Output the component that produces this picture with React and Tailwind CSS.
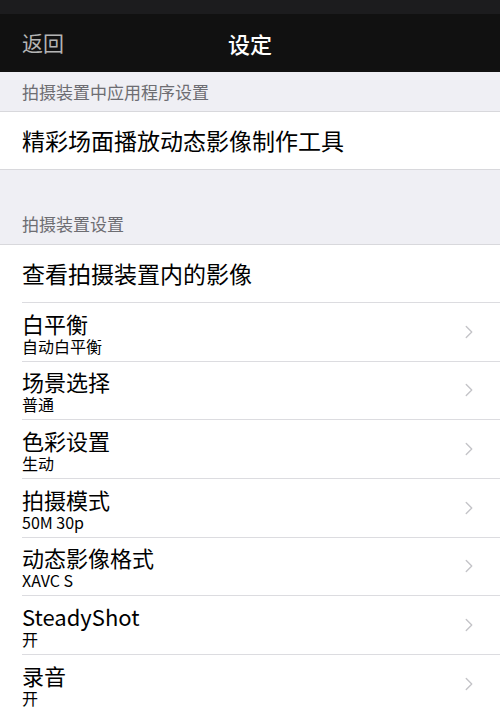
import { ChevronRight } from 'lucide-react'

const font = { fontFamily: '"Noto Sans CJK SC", "Liberation Sans", sans-serif' }

const items = [
  { title: '白平衡', sub: '自动白平衡' },
  { title: '场景选择', sub: '普通' },
  { title: '色彩设置', sub: '生动' },
  { title: '拍摄模式', sub: '50M 30p' },
  { title: '动态影像格式', sub: 'XAVC S' },
  { title: 'SteadyShot', sub: '开' },
  { title: '录音', sub: '开' },
]

export default function App() {
  return (
    <div className="w-[500px] h-[711px] overflow-hidden bg-white" style={font}>
      {/* nav */}
      <div className="h-[14px] bg-[#1c1c1e]" />
      <div className="h-[58px] bg-[#111111] flex items-center relative">
        <span className="pl-[22px] text-[21px] text-[#b4b4b4]">返回</span>
        <span className="absolute left-0 right-0 text-center text-[22px] font-medium text-white pointer-events-none">设定</span>
      </div>

      <div className="h-[40px] bg-[#efeff4] border-b border-[#d8d8dc] flex items-center px-[22px] text-[17px] text-[#6d6d72]">
        拍摄装置中应用程序设置
      </div>
      <div className="h-[58px] flex items-center px-[22px] text-[23px] text-black border-b border-[#d8d8dc]">
        精彩场面播放动态影像制作工具
      </div>

      <div className="h-[75px] bg-[#efeff4] border-b border-[#d8d8dc] flex items-end pb-[8px] px-[22px] text-[17px] text-[#6d6d72]">
        拍摄装置设置
      </div>
      <div className="pl-[22px]">
        <div className="h-[58px] flex items-center text-[23px] text-black border-b border-[#dcdce0]">
          查看拍摄装置内的影像
        </div>
        {items.map((it) => (
          <div key={it.title} className="h-[58.67px] flex items-center border-b border-[#dcdce0]">
            <div className="flex-1 flex flex-col pt-[2px]">
              <span className="text-[22px] text-black leading-[27px]">{it.title}</span>
              <span className="text-[16px] text-black leading-[19px]">{it.sub}</span>
            </div>
            <ChevronRight className="w-[22px] h-[22px] text-[#c4c4c8] mr-[20px]" strokeWidth={1.5} />
          </div>
        ))}
      </div>
    </div>
  )
}
